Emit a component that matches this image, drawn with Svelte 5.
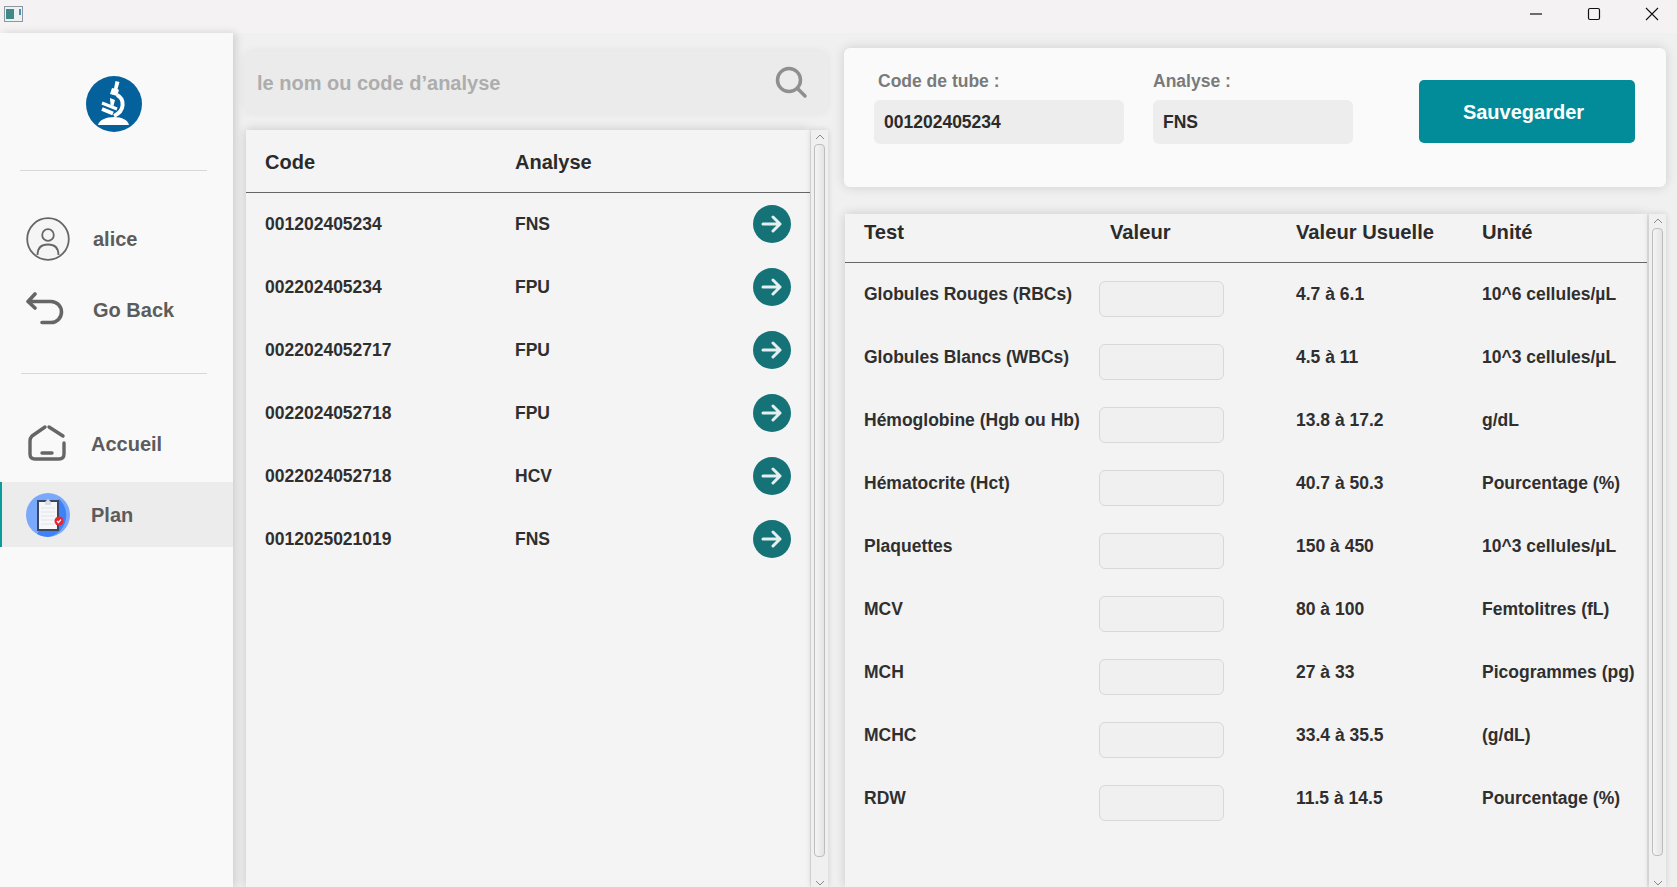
<script>
  const plans = [
    { code: "001202405234", analyse: "FNS" },
    { code: "002202405234", analyse: "FPU" },
    { code: "0022024052717", analyse: "FPU" },
    { code: "0022024052718", analyse: "FPU" },
    { code: "0022024052718", analyse: "HCV" },
    { code: "0012025021019", analyse: "FNS" }
  ];

  const tests = [
    { name: "Globules Rouges (RBCs)", range: "4.7 à 6.1", unit: "10^6 cellules/µL" },
    { name: "Globules Blancs (WBCs)", range: "4.5 à 11", unit: "10^3 cellules/µL" },
    { name: "Hémoglobine (Hgb ou Hb)", range: "13.8 à 17.2", unit: "g/dL" },
    { name: "Hématocrite (Hct)", range: "40.7 à 50.3", unit: "Pourcentage (%)" },
    { name: "Plaquettes", range: "150 à 450", unit: "10^3 cellules/µL" },
    { name: "MCV", range: "80 à 100", unit: "Femtolitres (fL)" },
    { name: "MCH", range: "27 à 33", unit: "Picogrammes (pg)" },
    { name: "MCHC", range: "33.4 à 35.5", unit: "(g/dL)" },
    { name: "RDW", range: "11.5 à 14.5", unit: "Pourcentage (%)" }
  ];
</script>

{#snippet scrollbar(thumb)}
  <div class="scrollbar">
    <svg class="chev" width="12" height="8" viewBox="0 0 12 8"><path d="M2 6l4-4 4 4" fill="none" stroke="#8a8a8a" /></svg>
    <div class="track"><div class="thumb" style="height: {thumb}px"></div></div>
    <svg class="chev" width="12" height="8" viewBox="0 0 12 8"><path d="M2 2l4 4 4-4" fill="none" stroke="#8a8a8a" /></svg>
  </div>
{/snippet}

<div class="window">
  <header class="titlebar">
    <svg class="app-icon" width="19" height="16" viewBox="0 0 19 16">
      <rect x="0.5" y="0.5" width="18" height="15" fill="#eef0f2" stroke="#8d96a3" />
      <rect x="2" y="3" width="8" height="10" fill="#3f8a86" />
      <rect x="15" y="3" width="2" height="6" fill="#4a90b8" />
    </svg>
    <div class="controls">
      <svg width="14" height="14" viewBox="0 0 14 14"><path d="M1 7h12" stroke="#111" stroke-width="1.2" /></svg>
      <svg width="14" height="14" viewBox="0 0 14 14"><rect x="1.5" y="1.5" width="11" height="11" rx="1.5" fill="none" stroke="#111" stroke-width="1.2" /></svg>
      <svg width="14" height="14" viewBox="0 0 14 14"><path d="M1 1l12 12M13 1L1 13" stroke="#111" stroke-width="1.1" /></svg>
    </div>
  </header>

  <div class="content">
    <aside class="sidebar">
      <div class="logo">
        <svg width="56" height="56" viewBox="0 0 56 56">
          <circle cx="28" cy="28" r="28" fill="#04619b" />
          <path d="M29.500 5l4 1-2 7 1.500 1-2 6-7-2 2-6 2 .5z" fill="#fff" />
          <path d="M31 19c8 4 8 16-3 21" stroke="#fff" stroke-width="4" fill="none" />
          <path d="M24 22l5 2-1.500 6-3-1z" fill="#fff" />
          <path d="M16 27l15 6" stroke="#fff" stroke-width="3" />
          <path d="M16 33l11 4.500" stroke="#fff" stroke-width="4" />
          <path d="M12 49c1-5 8-8 16-8 8 0 14 3 15 8z" fill="#fff" />
        </svg>
      </div>
      <hr class="rule" />
      <nav class="user">
        <div class="nav-item user-row">
          <svg width="44" height="44" viewBox="0 0 44 44">
            <circle cx="22" cy="22" r="20.8" fill="#f5f5f5" stroke="#666" stroke-width="1.8" />
            <circle cx="22" cy="18" r="5.8" fill="none" stroke="#666" stroke-width="1.8" />
            <path d="M11.500 38c0-7 4-10.500 10.500-10.500s10.500 3.500 10.500 10.500" fill="none" stroke="#666" stroke-width="1.8" />
          </svg>
          <span>alice</span>
        </div>
        <div class="nav-item back-row">
          <svg width="44" height="44" viewBox="0 0 44 44">
            <path d="M9 6L2 13.500l7 6.500M2 13.500H25a10.500 10.500 0 0 1 0 21H16" fill="none" stroke="#666" stroke-width="3.600" stroke-linecap="round" stroke-linejoin="round" />
          </svg>
          <span>Go Back</span>
        </div>
      </nav>
      <hr class="rule second" />
      <div class="nav-item home-row">
        <svg width="44" height="44" viewBox="0 0 44 44">
          <path d="M19 5L6 14q-2 2-2 5V32q0 5 5 5H33q5 0 5-5V21M23 5L37 14" fill="none" stroke="#666" stroke-width="3.400" stroke-linecap="round" stroke-linejoin="round" />
          <path d="M16 31h10" stroke="#666" stroke-width="3.400" stroke-linecap="round" />
        </svg>
        <span>Accueil</span>
      </div>
      <div class="nav-item plan-row">
        <svg width="44" height="44" viewBox="0 0 44 44">
          <circle cx="22" cy="22" r="22" fill="#7aa9fb" />
          <path d="M33 6a22 22 0 0 1-11 38 22 22 0 0 1-11-3z" fill="#3f82f7" />
          <rect x="11" y="7" width="22" height="31" fill="#3b4660" />
          <rect x="13" y="9" width="18" height="27" fill="#f6f7f9" />
          <path d="M19 9l3-3 3 3v3h-6z" fill="#d9dee6" />
          <path d="M15 15h14M15 19h14M15 23h14M15 27h14M15 31h14" stroke="#dfe3ea" />
          <circle cx="33" cy="28" r="4.500" fill="#e8242f" />
          <path d="M31 28l1.500 1.500 2.500-3" stroke="#fff" stroke-width="1.200" fill="none" />
        </svg>
        <span>Plan</span>
      </div>
    </aside>

    <section class="left">
      <div class="search">
        <span class="placeholder">le nom ou code d’analyse</span>
        <svg width="34" height="34" viewBox="0 0 34 34">
          <circle cx="14" cy="15" r="11.500" fill="none" stroke="#8f8f8f" stroke-width="3.500" />
          <path d="M23 24l7 7" stroke="#8f8f8f" stroke-width="3.500" stroke-linecap="round" />
        </svg>
      </div>
      <div class="list-wrap">
        <div class="list">
          <div class="list-head">
            <span>Code</span>
            <span>Analyse</span>
          </div>
          {#each plans as plan}
            <div class="list-row">
              <span>{plan.code}</span>
              <span>{plan.analyse}</span>
              <button class="go" aria-label="Ouvrir">
                <svg width="38" height="38" viewBox="0 0 38 38">
                  <circle cx="19" cy="19" r="19" fill="#157378" />
                  <path d="M10 19h17M20 12l7 7-7 7" fill="none" stroke="#e4efef" stroke-width="3" stroke-linecap="round" stroke-linejoin="round" />
                </svg>
              </button>
            </div>
          {/each}
        </div>
        {@render scrollbar(713)}
      </div>
    </section>

    <section class="right">
      <div class="card">
        <div class="field code">
          <span class="label">Code de tube :</span>
          <div class="value">001202405234</div>
        </div>
        <div class="field analyse">
          <span class="label">Analyse :</span>
          <div class="value">FNS</div>
        </div>
        <button class="save">Sauvegarder</button>
      </div>
      <div class="table-wrap">
        <div class="table">
          <div class="table-head">
            <span>Test</span>
            <span>Valeur</span>
            <span>Valeur Usuelle</span>
            <span>Unité</span>
          </div>
          {#each tests as test}
            <div class="table-row">
              <span>{test.name}</span>
              <input class="entry" type="text" aria-label={test.name} />
              <span>{test.range}</span>
              <span>{test.unit}</span>
            </div>
          {/each}
        </div>
        {@render scrollbar(628)}
      </div>
    </section>
  </div>
</div>

<style>
  :global(body) {
    margin: 0;
    overflow: hidden;
  }
  .window {
    width: 1677px;
    height: 887px;
    display: flex;
    flex-direction: column;
    background: #f3f3f3;
    font-family: "Liberation Sans", Arial, sans-serif;
    font-weight: 700;
    color: #2f2f2f;
    overflow: hidden;
  }
  .titlebar {
    height: 33px;
    flex: none;
    display: flex;
    justify-content: space-between;
    align-items: center;
    background: #f4f2f2;
    padding: 0 0 0 4px;
    box-sizing: border-box;
  }
  .app-icon {
    margin-bottom: 6px;
  }
  .controls {
    display: flex;
    gap: 44px;
    padding-right: 18px;
    margin-bottom: 5px;
    align-items: center;
  }
  .content {
    flex: 1;
    display: flex;
    min-height: 0;
    background: #f0f0f0;
  }
  .sidebar {
    width: 233px;
    flex: none;
    background: #f9f9f9;
    box-shadow: 3px 0 8px rgba(0, 0, 0, 0.14);
    position: relative;
    z-index: 1;
    display: flex;
    flex-direction: column;
    color: #5c5c5c;
    font-size: 20px;
  }
  .logo {
    display: flex;
    justify-content: center;
    padding: 43px 6px 0 0;
    height: 70px;
  }
  .logo svg {
    display: block;
  }
  .rule {
    margin: 24px 26px 0 20px;
    border: 0;
    border-top: 1px solid #d8d8d8;
    height: 0;
  }
  .rule.second {
    margin-top: 0;
    margin-left: 21px;
  }
  .user {
    height: 202px;
    padding-top: 46px;
    box-sizing: border-box;
  }
  .nav-item {
    display: flex;
    align-items: center;
    gap: 23px;
    padding-left: 26px;
    height: 44px;
  }
  .back-row {
    margin-top: 27px;
  }
  .home-row {
    margin-top: 48px;
    gap: 21px;
  }
  .plan-row {
    margin-top: 16px;
    height: 65px;
    gap: 21px;
    background: #ececec;
    border-left: 2px solid #0a9b9b;
    padding-left: 24px;
  }
  .plan-row span {
    padding-top: 2px;
  }
  .left {
    width: 584px;
    margin-left: 11px;
    display: flex;
    flex-direction: column;
    gap: 17px;
    padding-top: 18px;
    flex: none;
  }
  .search {
    height: 62px;
    flex: none;
    display: flex;
    align-items: center;
    justify-content: space-between;
    padding: 0 19px 0 13px;
    background: #ebebeb;
    border-radius: 7px;
    box-shadow: 0 0 8px rgba(0, 0, 0, 0.06);
  }
  .placeholder {
    color: #adadad;
    font-size: 20px;
    padding-top: 2px;
  }
  .list-wrap,
  .table-wrap {
    flex: 1;
    min-height: 0;
    display: flex;
    gap: 1px;
  }
  .list-wrap {
    margin-left: 2px;
  }
  .list {
    flex: 1;
    background: #f4f4f4;
    box-shadow: 0 0 10px rgba(0, 0, 0, 0.18);
  }
  .list-head {
    height: 60px;
    padding-top: 2px;
    display: grid;
    grid-template-columns: 250px 1fr;
    align-items: center;
    padding-left: 19px;
    border-bottom: 1px solid #666;
    font-size: 20px;
    color: #2b2b2b;
  }
  .list-row {
    height: 63px;
    display: grid;
    grid-template-columns: 250px 1fr 38px;
    align-items: center;
    padding: 0 19px;
    font-size: 17.500px;
  }
  .go {
    border: 0;
    padding: 0;
    background: none;
    width: 38px;
    height: 38px;
    margin-bottom: 1px;
  }
  .go svg {
    display: block;
  }
  .scrollbar {
    width: 17px;
    flex: none;
    background: #f0f0f0;
    box-shadow: 0 0 6px rgba(0, 0, 0, 0.14);
    display: flex;
    flex-direction: column;
    align-items: center;
  }
  .chev {
    flex: none;
    margin: 3px 0 0;
  }
  .track {
    flex: 1;
    padding-top: 3px;
    width: 11px;
  }
  .thumb {
    box-sizing: border-box;
    border: 1px solid #bdbdbd;
    border-radius: 4px;
    background: linear-gradient(90deg, #f5f5f5, #e4e4e4);
  }
  .right {
    width: 822px;
    margin-left: 16px;
    flex: none;
    display: flex;
    flex-direction: column;
    gap: 27px;
    padding-top: 15px;
  }
  .card {
    height: 139px;
    flex: none;
    box-sizing: border-box;
    background: #fafafa;
    border-radius: 6px;
    box-shadow: 0 0 12px rgba(0, 0, 0, 0.14);
    display: flex;
    padding-left: 30px;
  }
  .field {
    display: flex;
    flex-direction: column;
    padding-top: 22px;
  }
  .field.code {
    width: 250px;
  }
  .field.analyse {
    width: 200px;
    margin-left: 29px;
  }
  .label {
    font-size: 17.500px;
    color: #7a7a7a;
    height: 30px;
    line-height: 22px;
    padding-left: 4px;
  }
  .analyse .label {
    padding-left: 0;
  }
  .value {
    height: 44px;
    line-height: 44px;
    background: #ededed;
    border-radius: 6px;
    padding-left: 10px;
    font-size: 17.500px;
    color: #2b2b2b;
  }
  .save {
    width: 216px;
    height: 63px;
    margin: 32px 0 0 66px;
    padding: 2px 7px 0 0;
    border: 0;
    border-radius: 5px;
    background: #028c99;
    color: #fff;
    font-family: "Liberation Sans", sans-serif;
    font-size: 20px;
    font-weight: 700;
  }
  .table-wrap {
    gap: 2px;
    margin-left: 1px;
  }
  .table {
    flex: 1;
    background: #f3f3f3;
    box-shadow: 0 0 10px rgba(0, 0, 0, 0.16);
  }
  .table-head,
  .table-row {
    display: grid;
    grid-template-columns: 246px 186px 186px 1fr;
    padding-left: 19px;
  }
  .table-head {
    height: 36px;
    align-items: center;
    padding-bottom: 12px;
    border-bottom: 1px solid #666;
    font-size: 20.200px;
    color: #2b2b2b;
  }
  .table-row {
    height: 63px;
    font-size: 17.500px;
    align-items: start;
    line-height: 20px;
  }
  .table-row span {
    padding-top: 21px;
  }
  .entry {
    box-sizing: border-box;
    margin: 18px 0 0 -11px;
    width: 125px;
    height: 36px;
    background: #f0f0f0;
    border: 1.500px solid #d8d8d8;
    border-radius: 6px;
  }
</style>
